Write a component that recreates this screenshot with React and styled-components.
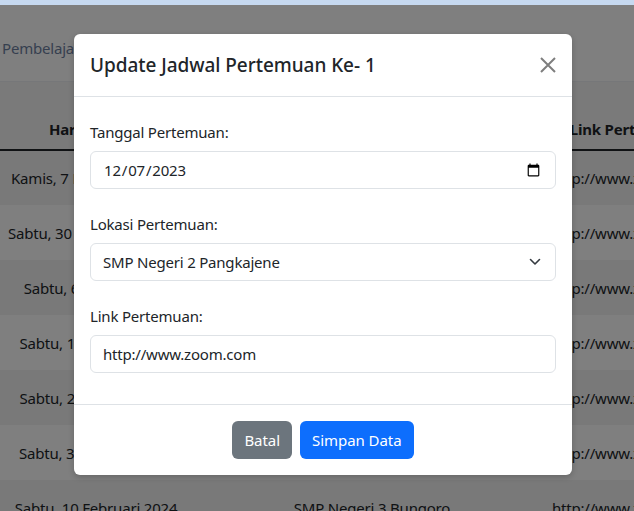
import React, { useState } from "react";
import styled, { createGlobalStyle } from "styled-components";

const GlobalStyle = createGlobalStyle`
  * { box-sizing: border-box; }
  html, body { margin: 0; padding: 0; height: 100%; overflow: hidden; }
  body {
    font-family: "Noto Sans", "Open Sans", Arial, sans-serif;
    color: #212529;
    background: #fff;
  }
`;

const TopStrip = styled.div`
  height: 5px;
  background: #c6d9f0;
`;

const Page = styled.div`
  position: relative;
  height: 506px;
  overflow: hidden;
  background: #fff;
`;

const PageHead = styled.div`
  height: 77px;
  display: flex;
  align-items: center;
  padding: 9px 2px 0;
  border-bottom: 1px solid #eceff2;
  font-size: 15px;
  letter-spacing: -0.2px;
  color: #6d7f9f;
`;

const Table = styled.table`
  width: 704px;
  border-collapse: collapse;
  font-size: 15px;
  letter-spacing: -0.2px;
  text-align: center;
  color: #212529;
  table-layout: fixed;
`;

const HeadCell = styled.th`
  height: 68px;
  vertical-align: bottom;
  padding: 0 0 10px;
  font-weight: 700;
  border-bottom: 2px solid #212529;
  background: #f4f4f4;
  width: ${(p) => p.w}px;
  white-space: nowrap;
`;

const Row = styled.tr`
  height: 55px;
  background: ${(p) => (p.odd ? "#f2f2f2" : "#fff")};
`;

const Cell = styled.td`
  padding: 0;
  white-space: nowrap;
`;

const Backdrop = styled.div`
  position: absolute;
  inset: 0;
  background: rgba(0, 0, 0, 0.5);
`;

const Dialog = styled.div`
  position: absolute;
  top: 29px;
  left: 74px;
  width: 498px;
  background: #fff;
  border-radius: 6px;
  box-shadow: 0 2px 6px rgba(0, 0, 0, 0.2);
  display: flex;
  flex-direction: column;
`;

const Header = styled.div`
  display: flex;
  align-items: center;
  justify-content: space-between;
  padding: 16px;
  border-bottom: 1px solid #dee2e6;
`;

const Title = styled.h5`
  margin: 0;
  font-size: 19px;
  font-weight: 500;
  line-height: 30px;
  letter-spacing: -0.05px;
`;

const CloseButton = styled.button`
  border: none;
  background: transparent;
  padding: 0;
  width: 16px;
  height: 16px;
  opacity: 0.5;
  cursor: pointer;
  display: flex;
`;

const Body = styled.div`
  padding: 23px 16px 31px;
  display: flex;
  flex-direction: column;
  gap: 23px;
`;

const Field = styled.div`
  display: flex;
  flex-direction: column;
`;

const Label = styled.label`
  font-size: 15px;
  letter-spacing: -0.2px;
  line-height: 24px;
  margin-bottom: 7px;
`;

const Input = styled.input`
  height: 38px;
  width: 100%;
  padding: 6px 12px;
  font-size: 15px;
  letter-spacing: -0.2px;
  font-family: inherit;
  color: #212529;
  border: 1px solid #dee2e6;
  border-radius: 6px;
  background: #fff;
  outline: none;
`;

const SelectWrap = styled.div`
  position: relative;
  height: 38px;
`;

const Select = styled.select`
  appearance: none;
  height: 38px;
  width: 100%;
  padding: 6px 36px 6px 12px;
  font-size: 15px;
  letter-spacing: -0.2px;
  font-family: inherit;
  color: #212529;
  border: 1px solid #dee2e6;
  border-radius: 6px;
  background: #fff;
  outline: none;
`;

const Chevron = styled.svg`
  position: absolute;
  right: 15px;
  top: 14px;
  pointer-events: none;
`;

const Footer = styled.div`
  display: flex;
  justify-content: center;
  gap: 8px;
  padding: 16px;
  border-top: 1px solid #dee2e6;
`;

const Button = styled.button`
  height: 38px;
  padding: 6px 12px;
  font-size: 15px;
  letter-spacing: -0.05px;
  font-family: inherit;
  color: #fff;
  border: none;
  border-radius: 6px;
  background: ${(p) => (p.primary ? "#0d6efd" : "#6c757d")};
  cursor: pointer;
`;

const rows = [
  ["Kamis, 7 Desember 2023", "SMP Negeri 2 Pangkajene"],
  ["Sabtu, 30 Desember 2023", "SMP Negeri 2 Pangkajene"],
  ["Sabtu, 6 Januari 2024", "SMP Negeri 1 Bungoro"],
  ["Sabtu, 13 Januari 2024", "SMP Negeri 1 Bungoro"],
  ["Sabtu, 20 Januari 2024", "SMP Negeri 3 Bungoro"],
  ["Sabtu, 3 Februari 2024", "SMP Negeri 3 Bungoro"],
  ["Sabtu, 10 Februari 2024", "SMP Negeri 3 Bungoro"],
];

const App = () => {
  const [tanggal, setTanggal] = useState("2023-12-07");
  const [lokasi, setLokasi] = useState("SMP Negeri 2 Pangkajene");
  const [link, setLink] = useState("http://www.zoom.com");

  return (
    <>
      <GlobalStyle />
      <TopStrip />
      <Page>
        <PageHead>Pembelajaran</PageHead>
        <Table>
          <thead>
            <tr>
              <HeadCell w={192}>Hari/Tanggal</HeadCell>
              <HeadCell w={360}>Lokasi Pertemuan</HeadCell>
              <HeadCell w={152}>Link Pertemuan</HeadCell>
            </tr>
          </thead>
          <tbody>
            {rows.map((r, i) => (
              <Row key={i} odd={i % 2 === 0}>
                <Cell>{r[0]}</Cell>
                <Cell>{r[1]}</Cell>
                <Cell>http://www.zoom.com</Cell>
              </Row>
            ))}
          </tbody>
        </Table>
        <Backdrop />
        <Dialog>
          <Header>
            <Title>Update Jadwal Pertemuan Ke- 1</Title>
            <CloseButton aria-label="Close">
              <svg width="16" height="16" viewBox="0 0 16 16">
                <path
                  d="M1 1L15 15M15 1L1 15"
                  stroke="#000"
                  strokeWidth="2"
                  fill="none"
                />
              </svg>
            </CloseButton>
          </Header>
          <Body>
            <Field>
              <Label>Tanggal Pertemuan:</Label>
              <Input
                type="date"
                value={tanggal}
                onChange={(e) => setTanggal(e.target.value)}
              />
            </Field>
            <Field>
              <Label>Lokasi Pertemuan:</Label>
              <SelectWrap>
                <Select value={lokasi} onChange={(e) => setLokasi(e.target.value)}>
                  <option>SMP Negeri 2 Pangkajene</option>
                  <option>SMP Negeri 1 Bungoro</option>
                  <option>SMP Negeri 3 Bungoro</option>
                </Select>
                <Chevron width="12" height="9" viewBox="0 0 12 9">
                  <path
                    d="M1.5 2.5L6 7L10.5 2.5"
                    stroke="#343a40"
                    strokeWidth="1.6"
                    fill="none"
                    strokeLinecap="round"
                    strokeLinejoin="round"
                  />
                </Chevron>
              </SelectWrap>
            </Field>
            <Field>
              <Label>Link Pertemuan:</Label>
              <Input value={link} onChange={(e) => setLink(e.target.value)} />
            </Field>
          </Body>
          <Footer>
            <Button>Batal</Button>
            <Button primary>Simpan Data</Button>
          </Footer>
        </Dialog>
      </Page>
    </>
  );
};

export default App;
